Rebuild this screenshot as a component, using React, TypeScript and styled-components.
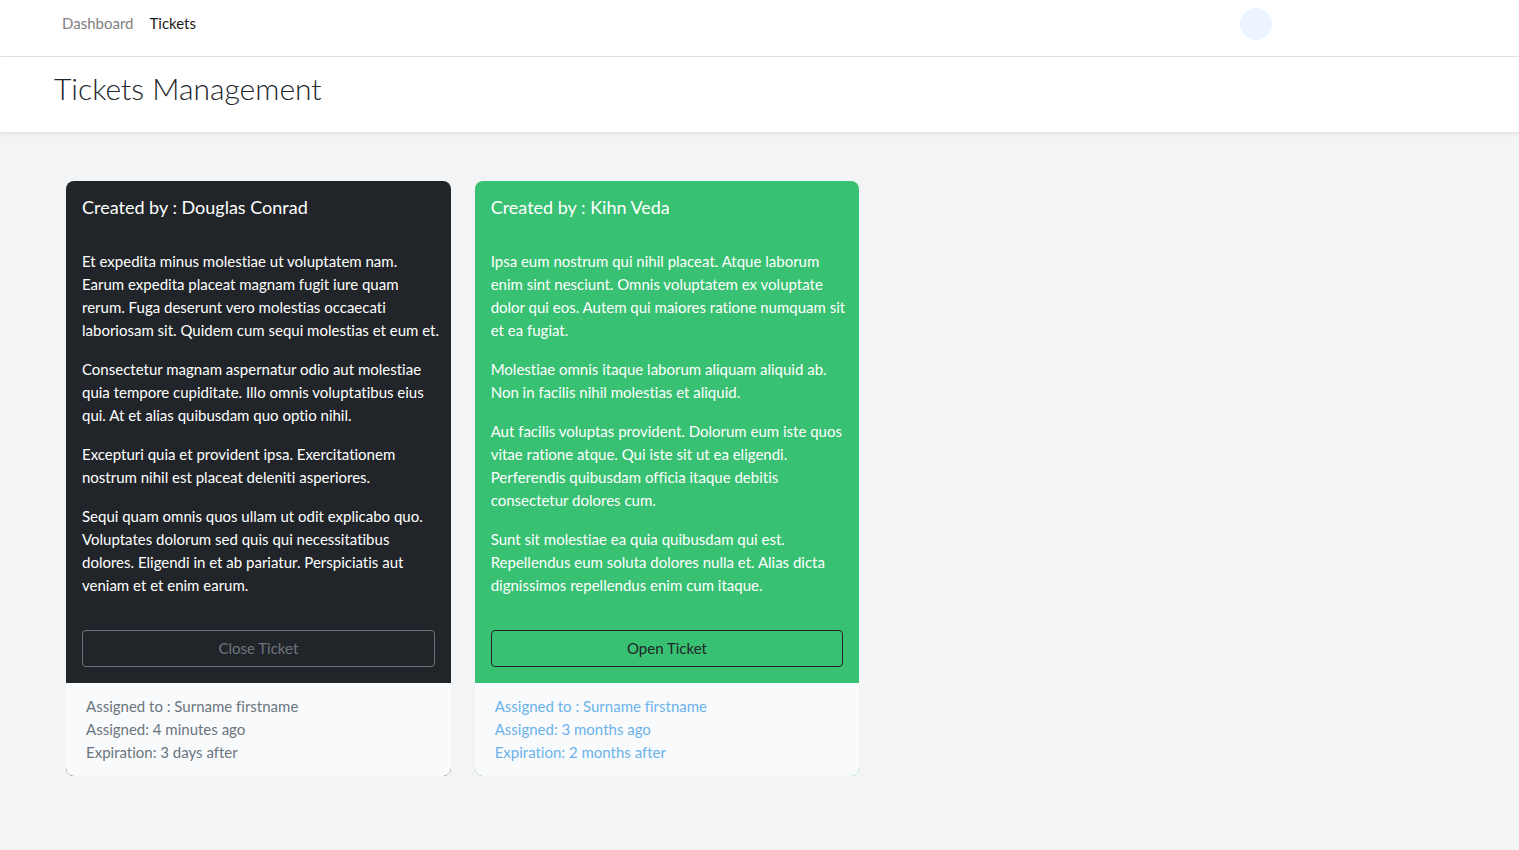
import React from "react";
import styled, { createGlobalStyle } from "styled-components";

const GlobalStyle = createGlobalStyle`
  *, *::before, *::after { box-sizing: border-box; }
  body {
    margin: 0;
    background: #f3f4f6;
    color: #212529;
    font-family: Lato, "Open Sans", sans-serif;
    font-size: 15px;
    line-height: 23px;
    font-variant-ligatures: none;
  }
  h1, h2, p, ul { margin: 0; padding: 0; font-weight: 400; }
`;

const Container = styled.div`
  width: 100%;
  max-width: 1334px;
  padding: 0 54px;
`;

const NavBar = styled.nav`
  background: #fff;
  border-bottom: 1px solid #dee2e6;
`;

const NavInner = styled(Container)`
  display: flex;
  align-items: flex-start;
  justify-content: space-between;
  padding-top: 8px;
  padding-bottom: 16px;
`;

const NavLinks = styled.div`
  display: flex;
  gap: 16px;
  padding: 4px 8px;
`;

const NavLink = styled.a<{ $active?: boolean }>`
  color: ${({ $active }) => ($active ? "#1a1a1a" : "#808080")};
  text-decoration: none;
`;

const Avatar = styled.button`
  width: 32px;
  height: 32px;
  margin-right: 8px;
  padding: 0;
  border: 0;
  border-radius: 50%;
  background: #ebf4ff;
`;

const PageHeader = styled.header`
  background: #fff;
  box-shadow: 0 2px 4px rgba(0, 0, 0, 0.075);
`;

const HeaderInner = styled(Container)`
  padding-top: 16px;
  padding-bottom: 28px;
`;

const PageTitle = styled.h1`
  font-size: 30px;
  font-weight: 300;
  line-height: 31px;
`;

const TicketGrid = styled.div`
  display: grid;
  grid-template-columns: repeat(auto-fill, minmax(340px, 1fr));
  gap: 24px;
  padding: 49px 12px;
`;

const Card = styled.article<{ $tone: string }>`
  display: flex;
  flex-direction: column;
  overflow: hidden;
  border-radius: 8px;
  background: ${({ $tone }) => $tone};
`;

const CardBody = styled.div`
  display: flex;
  flex: 1;
  flex-direction: column;
  padding: 16px;
  color: #fff;
`;

const CardTitle = styled.h2`
  font-size: 18px;
  line-height: 21px;
`;

const Message = styled.div`
  display: flex;
  flex: 1;
  flex-direction: column;
  gap: 16px;
  margin-right: -12px;
  padding: 32px 0 33px;
`;

const Paragraph = styled.p`
  white-space: pre-line;
`;

const TicketButton = styled.button<{ $color: string }>`
  width: 100%;
  padding: 6px 12px;
  border: 1px solid ${({ $color }) => $color};
  border-radius: 4px;
  background: transparent;
  color: ${({ $color }) => $color};
  font: inherit;
`;

const CardFooter = styled.ul<{ $color: string }>`
  padding: 12px 20px;
  border-radius: 0 0 7px 7px;
  background: #f8fafc;
  color: ${({ $color }) => $color};
  list-style: none;
`;

const tickets = [
  {
    author: "Douglas Conrad",
    tone: "#212529",
    accent: "#6c757d",
    footer: "#6c757d",
    action: "Close Ticket",
    message: [
      "Et expedita minus molestiae ut voluptatem nam.\nEarum expedita placeat magnam fugit iure quam\nrerum. Fuga deserunt vero molestias occaecati\nlaboriosam sit. Quidem cum sequi molestias et eum et.",
      "Consectetur magnam aspernatur odio aut molestiae\nquia tempore cupiditate. Illo omnis voluptatibus eius\nqui. At et alias quibusdam quo optio nihil.",
      "Excepturi quia et provident ipsa. Exercitationem\nnostrum nihil est placeat deleniti asperiores.",
      "Sequi quam omnis quos ullam ut odit explicabo quo.\nVoluptates dolorum sed quis qui necessitatibus\ndolores. Eligendi in et ab pariatur. Perspiciatis aut\nveniam et et enim earum.",
    ],
    details: [
      "Assigned to : Surname firstname",
      "Assigned: 4 minutes ago",
      "Expiration: 3 days after",
    ],
  },
  {
    author: "Kihn Veda",
    tone: "#38c172",
    accent: "#212529",
    footer: "#6cb2eb",
    action: "Open Ticket",
    message: [
      "Ipsa eum nostrum qui nihil placeat. Atque laborum\nenim sint nesciunt. Omnis voluptatem ex voluptate\ndolor qui eos. Autem qui maiores ratione numquam sit\net ea fugiat.",
      "Molestiae omnis itaque laborum aliquam aliquid ab.\nNon in facilis nihil molestias et aliquid.",
      "Aut facilis voluptas provident. Dolorum eum iste quos\nvitae ratione atque. Qui iste sit ut ea eligendi.\nPerferendis quibusdam officia itaque debitis\nconsectetur dolores cum.",
      "Sunt sit molestiae ea quia quibusdam qui est.\nRepellendus eum soluta dolores nulla et. Alias dicta\ndignissimos repellendus enim cum itaque.",
    ],
    details: [
      "Assigned to : Surname firstname",
      "Assigned: 3 months ago",
      "Expiration: 2 months after",
    ],
  },
];

export default function App() {
  return (
    <>
      <GlobalStyle />
      <NavBar>
        <NavInner>
          <NavLinks>
            <NavLink href="#dashboard">Dashboard</NavLink>
            <NavLink href="#tickets" $active aria-current="page">
              Tickets
            </NavLink>
          </NavLinks>
          <Avatar type="button" aria-label="Account menu" />
        </NavInner>
      </NavBar>
      <PageHeader>
        <HeaderInner>
          <PageTitle>Tickets Management</PageTitle>
        </HeaderInner>
      </PageHeader>
      <Container as="main">
        <TicketGrid>
          {tickets.map((t) => (
            <Card key={t.author} $tone={t.tone}>
              <CardBody>
                <CardTitle>Created by : {t.author}</CardTitle>
                <Message>
                  {t.message.map((text) => (
                    <Paragraph key={text}>{text}</Paragraph>
                  ))}
                </Message>
                <TicketButton type="button" $color={t.accent}>
                  {t.action}
                </TicketButton>
              </CardBody>
              <CardFooter $color={t.footer}>
                {t.details.map((line) => (
                  <li key={line}>{line}</li>
                ))}
              </CardFooter>
            </Card>
          ))}
        </TicketGrid>
      </Container>
    </>
  );
}
